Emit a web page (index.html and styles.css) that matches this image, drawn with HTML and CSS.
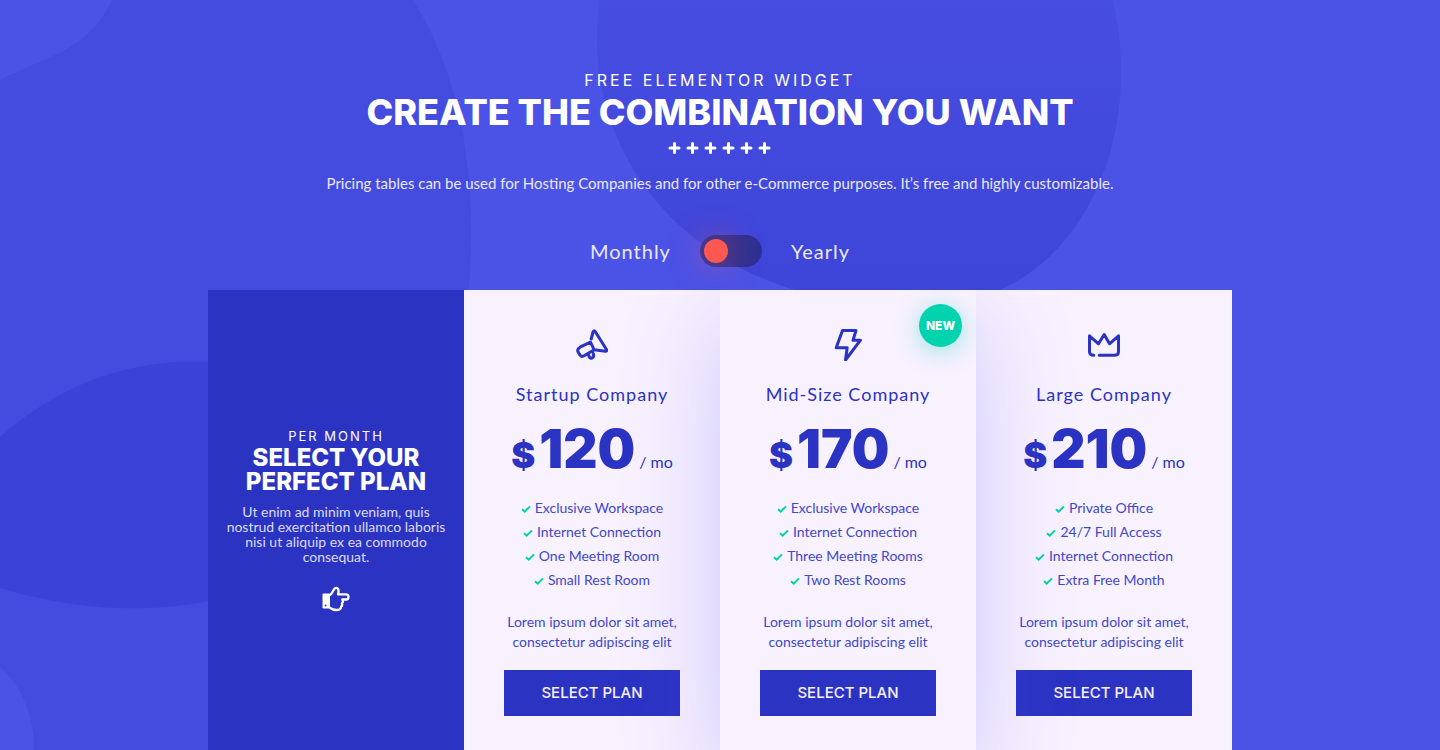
FILE: index.html
```html
<!DOCTYPE html>
<html lang="en">
<head>
<meta charset="utf-8">
<meta name="viewport" content="width=device-width, initial-scale=1">
<title>Pricing</title>
<link rel="stylesheet" href="styles.css">
</head>
<body>
<svg width="0" height="0" class="symbols" aria-hidden="true">
  <symbol id="check" viewBox="0 0 10 8"><path d="M1 4.2 3.7 6.6 9 1.4" fill="none" stroke="currentColor" stroke-width="2"/></symbol>
</svg>
<main class="page">
  <svg class="backdrop" viewBox="0 0 1440 750" preserveAspectRatio="xMidYMin slice" aria-hidden="true">
    <defs>
      <linearGradient id="fade" x1="0" y1="0" x2="0" y2="1">
        <stop offset="0" stop-color="#464de0"/><stop offset="1" stop-color="#3d44d8"/>
      </linearGradient>
    </defs>
    <path fill="#444bdf" d="M112 0H413C452 62 471 140 471 230C471 420 400 560 330 750H34C34 718 24 688 0 667V80C42 58 88 52 112 0Z"/>
    <path fill="#3b42d7" d="M0 437C55 388 125 358 207 362H330V560C250 600 140 630 0 588Z"/>
    <path fill="url(#fade)" d="M600 0C580 130 660 250 795 290Q900 318 1000 290C1090 250 1142 130 1113 0Z"/>
  </svg>

  <header class="intro">
    <p class="eyebrow">FREE ELEMENTOR WIDGET</p>
    <h1 class="title">CREATE THE COMBINATION YOU WANT</h1>
    <svg class="pluses" viewBox="0 0 104 12" aria-hidden="true"><path d="M2 6h9M6.500 1.500v9M20 6h9M24.500 1.500v9M38 6h9M42.500 1.500v9M56 6h9M60.500 1.500v9M74 6h9M78.500 1.500v9M92 6h9M96.500 1.500v9"/></svg>
    <p class="lead">Pricing tables can be used for Hosting Companies and for other e-Commerce purposes. It’s free and highly customizable.</p>
    <div class="period">
      <label for="period">Monthly</label>
      <input class="switch" type="checkbox" role="switch" id="period">
      <label for="period">Yearly</label>
    </div>
  </header>

  <section class="plans">
    <div class="pitch">
      <p class="pitch-eyebrow">PER MONTH</p>
      <h2 class="pitch-title">SELECT YOUR PERFECT PLAN</h2>
      <p class="pitch-text">Ut enim ad minim veniam, quis nostrud exercitation ullamco laboris nisi ut aliquip ex ea commodo consequat.</p>
      <svg class="hand" viewBox="0 0 28 26" aria-hidden="true">
        <rect x=".5" y="7.500" width="7.500" height="15" rx="1" fill="#fff"/>
        <circle cx="3.500" cy="19.500" r="1" fill="#2b33c3"/>
        <path fill="none" stroke="#fff" stroke-width="2.300" stroke-linejoin="round" d="M7.500 9.200C10.500 8 11 3.500 13 2.300C15.500 .9 17.500 3.200 16 8.300H24C27.300 8.300 27.300 13.500 24 13.500H20.300C21.300 15 20.800 16.500 20 17.300C20.500 19 20 20 19.200 20.500C19 25 12 25 7.500 21.500"/>
      </svg>
    </div>

    <article class="plan">
      <svg class="icon" viewBox="0 0 32 32" aria-hidden="true"><path d="M15.200 10 17.200 2.500Q18.200 .8 19.200 2.500L30.500 20.500Q31.200 22.400 29.500 22.200L18.200 20.800 14.500 13.200 4 18.200Q.6 20.200 2.200 23L4 26.200Q5.600 28.400 8.500 26.600L18.200 20.800M12.600 26.200Q13.500 29.600 15.800 29.200Q18.600 28 17.300 24.600"/></svg>
      <h3 class="name">Startup Company</h3>
      <p class="price"><span class="currency">$</span><span class="amount">120</span><span class="per">/ mo</span></p>
      <ul class="features">
        <li><svg class="check"><use href="#check"/></svg>Exclusive Workspace</li>
        <li><svg class="check"><use href="#check"/></svg>Internet Connection</li>
        <li><svg class="check"><use href="#check"/></svg>One Meeting Room</li>
        <li><svg class="check"><use href="#check"/></svg>Small Rest Room</li>
      </ul>
      <p class="note">Lorem ipsum dolor sit amet, consectetur adipiscing elit</p>
      <button class="select" type="button">SELECT PLAN</button>
    </article>

    <article class="plan plan-featured">
      <span class="badge">NEW</span>
      <svg class="icon" viewBox="0 0 32 32" aria-hidden="true"><path d="M10.500 1.500H24L21 11.200H28.500L13.500 31 15.200 18.700H4.200Z"/></svg>
      <h3 class="name">Mid-Size Company</h3>
      <p class="price"><span class="currency">$</span><span class="amount">170</span><span class="per">/ mo</span></p>
      <ul class="features">
        <li><svg class="check"><use href="#check"/></svg>Exclusive Workspace</li>
        <li><svg class="check"><use href="#check"/></svg>Internet Connection</li>
        <li><svg class="check"><use href="#check"/></svg>Three Meeting Rooms</li>
        <li><svg class="check"><use href="#check"/></svg>Two Rest Rooms</li>
      </ul>
      <p class="note">Lorem ipsum dolor sit amet, consectetur adipiscing elit</p>
      <button class="select" type="button">SELECT PLAN</button>
    </article>

    <article class="plan">
      <svg class="icon" viewBox="0 0 32 32" aria-hidden="true"><path d="M5.800 26.200Q1.500 26.200 1.500 22.500V6.800L10.500 14.800 16.200 5.500 21.500 14.800 30.500 6.800V22.500Q30.500 26.200 27 26.200H11.200"/></svg>
      <h3 class="name">Large Company</h3>
      <p class="price"><span class="currency">$</span><span class="amount">210</span><span class="per">/ mo</span></p>
      <ul class="features">
        <li><svg class="check"><use href="#check"/></svg>Private Office</li>
        <li><svg class="check"><use href="#check"/></svg>24/7 Full Access</li>
        <li><svg class="check"><use href="#check"/></svg>Internet Connection</li>
        <li><svg class="check"><use href="#check"/></svg>Extra Free Month</li>
      </ul>
      <p class="note">Lorem ipsum dolor sit amet, consectetur adipiscing elit</p>
      <button class="select" type="button">SELECT PLAN</button>
    </article>
  </section>
</main>
</body>
</html>
```
FILE: styles.css
```css
:root {
  --blue: #2b33c3;
  --display: Inter, "Liberation Sans", sans-serif;
  --text: Lato, "Liberation Sans", sans-serif;
}
* { box-sizing: border-box; margin: 0; padding: 0; }
body { background: #4b52e6; color: #fff; font-family: var(--text); }
.symbols { position: absolute; }
.page {
  position: relative;
  min-height: 100vh;
  display: flex;
  flex-direction: column;
  align-items: center;
  overflow: hidden;
}
.backdrop { position: absolute; inset: 0; width: 100%; height: 100%; }

.intro {
  position: relative;
  display: flex;
  flex-direction: column;
  align-items: center;
  padding: 70px 16px 23px;
  text-align: center;
}
.eyebrow { font: 400 16px/20px var(--display); letter-spacing: 3px; }
.title { font: 800 36px/44px var(--display); }
.pluses { width: 104px; height: 12px; margin-top: 8px; }
.pluses path { stroke: #fff; stroke-width: 3; stroke-linecap: round; }
.lead { margin-top: 19px; font-size: 15px; line-height: 20px; color: #e9e8fd; }
.period {
  display: flex;
  align-items: center;
  gap: 29px;
  margin-top: 42px;
  font-size: 20px;
  line-height: 32px;
  letter-spacing: 1px;
  color: #e9e8fd;
}
.switch {
  appearance: none;
  width: 62px;
  height: 32px;
  padding: 4px;
  border-radius: 16px;
  background: rgba(40, 42, 120, .75);
  cursor: pointer;
}
.switch::before {
  content: "";
  display: block;
  width: 24px;
  height: 24px;
  border-radius: 50%;
  background: #ff5851;
  box-shadow: 0 0 32px rgba(255, 88, 81, .65);
}
.switch:checked::before { margin-left: auto; }

.plans {
  position: relative;
  flex: 1;
  width: 100%;
  max-width: 1024px;
  display: grid;
  grid-template-columns: repeat(4, 1fr);
  overflow: hidden;
}
.pitch {
  display: flex;
  flex-direction: column;
  align-items: center;
  justify-content: center;
  padding: 0 14px;
  background: var(--blue);
  text-align: center;
}
.pitch-eyebrow { font: 400 13px/16px var(--display); letter-spacing: 2px; }
.pitch-title { font: 800 24px/24px var(--display); margin-top: 2px; padding: 0 8px; }
.pitch-text { margin-top: 10px; font-size: 14px; line-height: 15px; color: #dcdcf8; }
.hand { width: 28px; height: 26px; margin-top: 22px; }

.plan {
  position: relative;
  display: flex;
  flex-direction: column;
  align-items: center;
  padding: 39px 40px 34px;
  background: #f8f1ff;
  color: var(--blue);
  text-align: center;
}
.plan-featured { z-index: 1; box-shadow: 0 32px 96px rgba(80, 84, 240, .26); }
.badge {
  position: absolute;
  top: 14px;
  right: 14px;
  width: 43px;
  border-radius: 50%;
  background: #00d3ae;
  box-shadow: 0 4px 24px rgba(0, 211, 174, .4);
  color: #fff;
  font: 800 12px/43px var(--display);
}
.icon { width: 32px; height: 32px; }
.icon path {
  fill: none;
  stroke: currentColor;
  stroke-width: 3;
  stroke-linecap: round;
  stroke-linejoin: round;
}
.name { margin-top: 21px; font-weight: 400; font-size: 18px; line-height: 24px; letter-spacing: 1px; }
.price {
  display: flex;
  align-items: baseline;
  margin-top: 13px;
  line-height: 60px;
  white-space: nowrap;
}
.currency { margin-right: 4px; font: 900 36px/60px var(--display); }
.amount { font: 900 53px/60px var(--display); }
.per { margin-left: 4px; font-size: 16px; }
.features { list-style: none; margin-top: 4px; font-size: 14px; line-height: 24px; color: #4148ca; }
.features li { white-space: nowrap; }
.check { width: 10px; height: 8px; margin-right: 4px; color: #00d3a7; }
.note { margin-top: 20px; font-size: 14px; line-height: 20px; color: #4148ca; }
.select {
  align-self: stretch;
  margin-top: 18px;
  border: 0;
  background: var(--blue);
  color: #f8f1ff;
  font: 500 15px/46px var(--display);
  cursor: pointer;
}

@media (max-width: 900px) {
  .plans { grid-template-columns: repeat(2, 1fr); }
}
```
